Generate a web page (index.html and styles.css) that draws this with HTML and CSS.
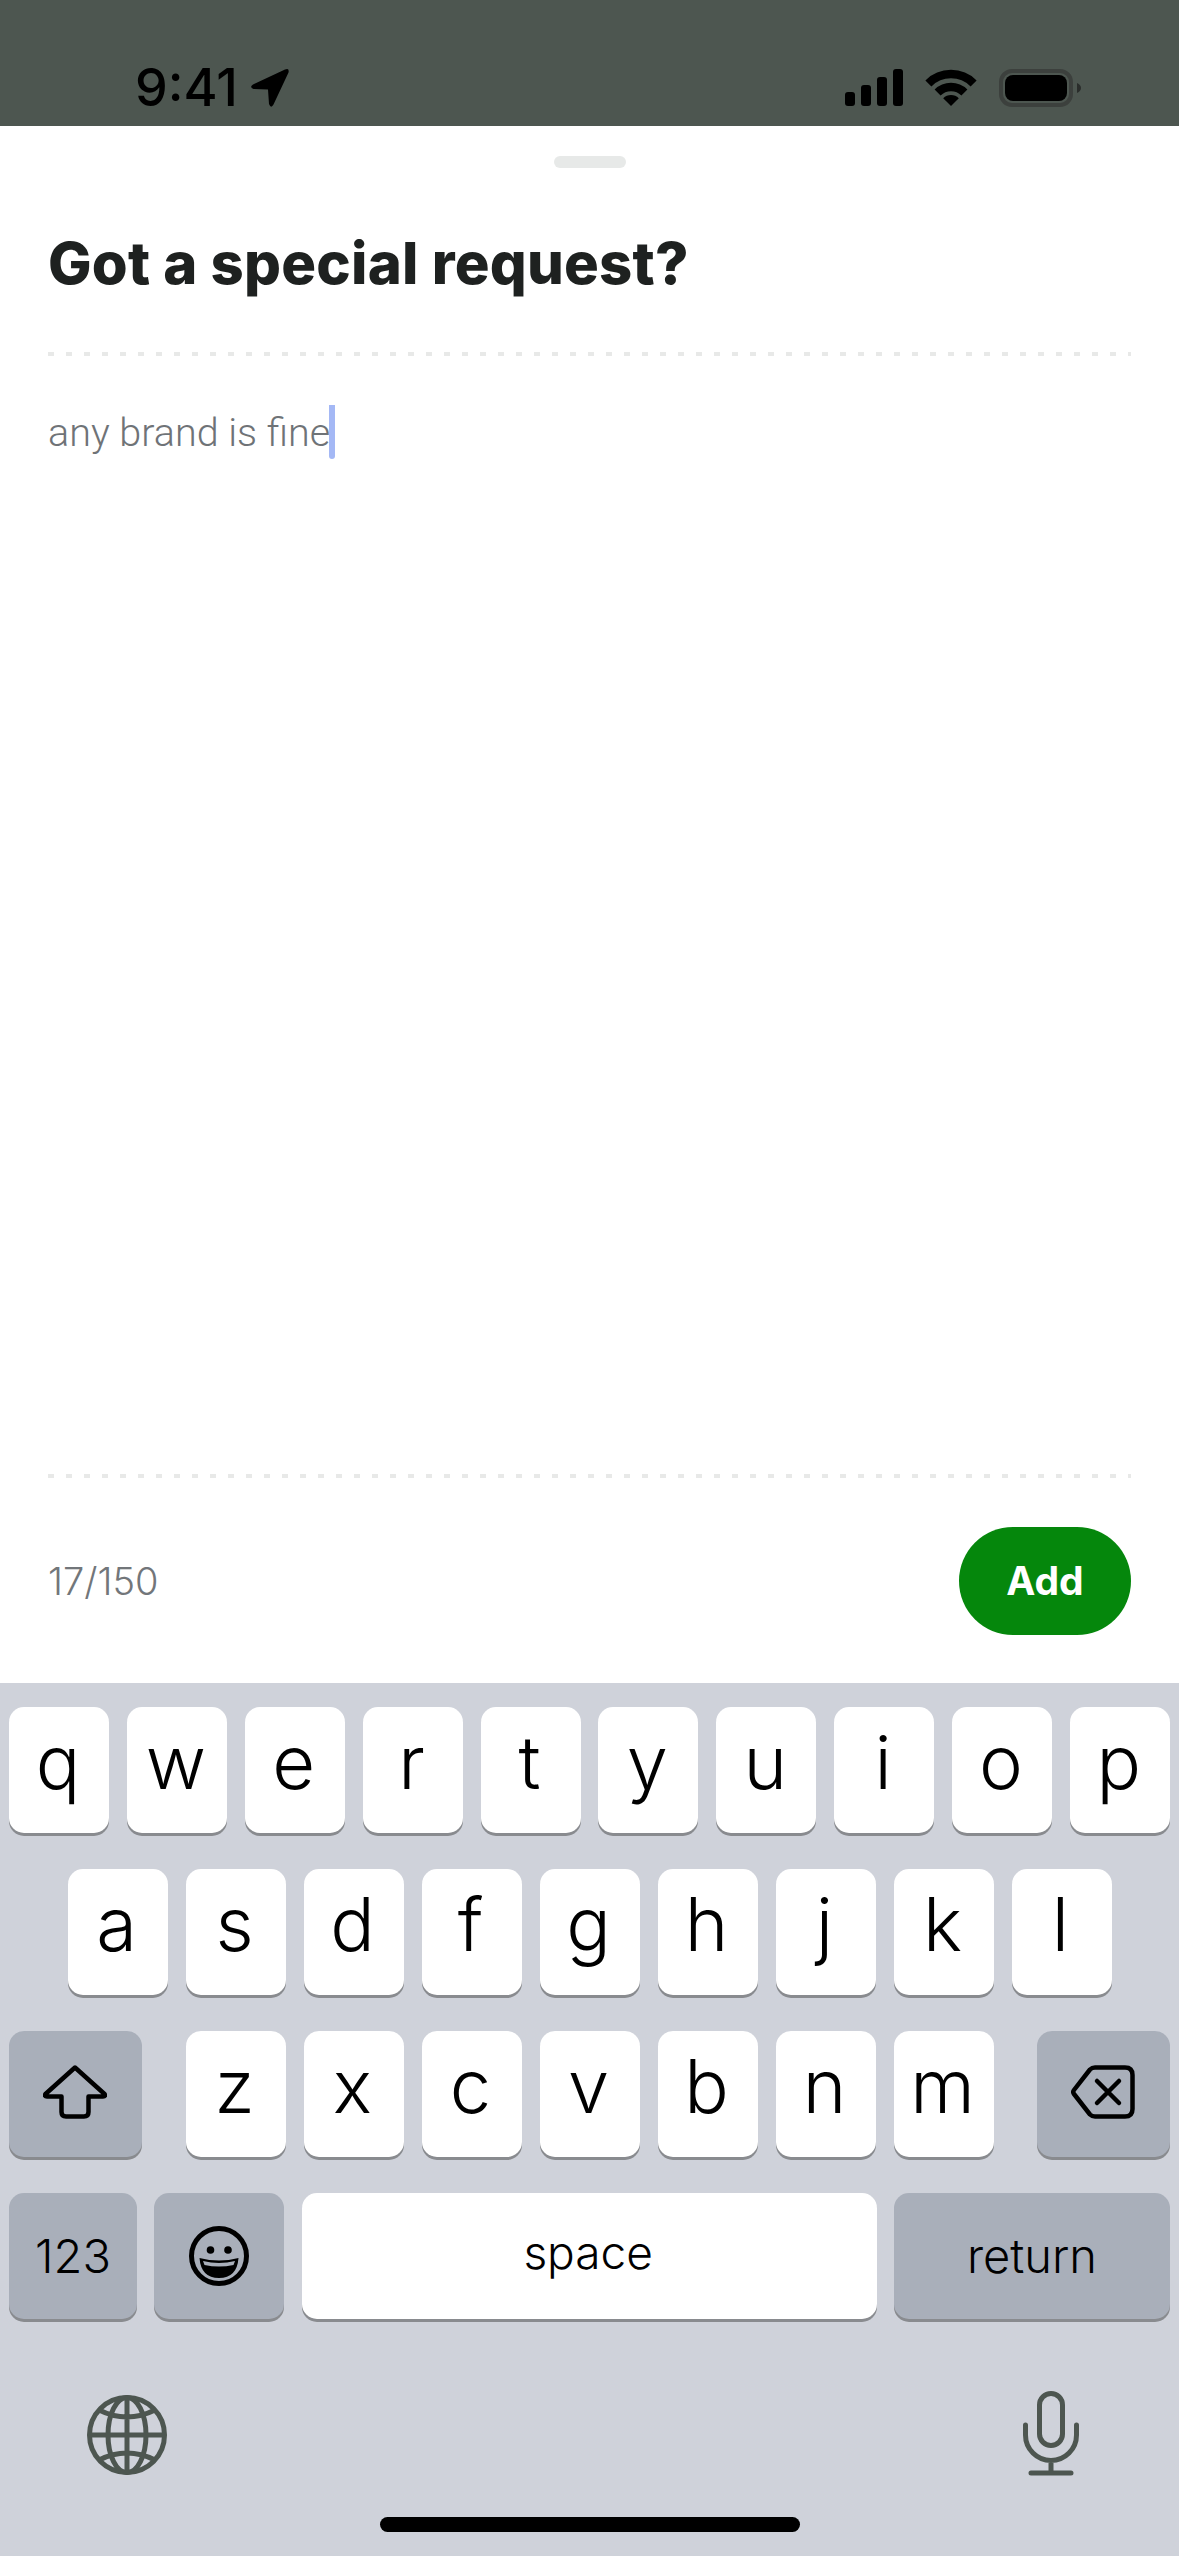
FILE: index.html
```html
<!DOCTYPE html>
<html lang="en">
<head>
<meta charset="utf-8">
<title>Got a special request?</title>
<link rel="stylesheet" href="styles.css">
</head>
<body>
<div class="screen">
  <header class="status">
    <div class="status-left">
      <span class="time">9:41</span>
      <svg class="loc" viewBox="0 0 40 40"><path d="M35 1.5 L3 16.5 Q-1 19 3.5 21 L18 21.5 L19 36 Q21 41 23.5 36.5 L38.5 4.5 Q39.5 -.5 35 1.5Z"/></svg>
    </div>
    <div class="status-right">
      <svg class="signal" viewBox="0 0 58 37"><rect x="0" y="23" width="10" height="14" rx="3"/><rect x="16" y="16" width="10" height="21" rx="3"/><rect x="32" y="8" width="10" height="29" rx="3"/><rect x="48" y="0" width="10" height="37" rx="3"/></svg>
      <svg class="wifi" viewBox="0 0 52 38"><path d="M26 37 L18.2 29.2 A11 11 0 0 1 33.8 29.2Z"/><path class="wifi-arc" d="M12.6 23.6 A19 19 0 0 1 39.4 23.6"/><path class="wifi-arc" d="M3.4 14.4 A32 32 0 0 1 48.6 14.4"/></svg>
      <svg class="battery" viewBox="0 0 82 38"><rect class="batt-frame" x="2" y="2" width="70" height="34" rx="11"/><rect x="6" y="6" width="62" height="26" rx="8"/><path class="batt-nub" d="M78 14 Q82 16 82 19 Q82 22 78 24Z"/></svg>
    </div>
  </header>

  <main class="sheet">
    <div class="handle"></div>
    <h1 class="title">Got a special request?</h1>
    <div class="dots"></div>
    <div class="field"><span class="field-text">any brand is fine</span><span class="caret"></span></div>
    <div class="dots"></div>
    <div class="foot">
      <span class="count">17/150</span>
      <button class="add">Add</button>
    </div>
  </main>

  <section class="keyboard">
    <div class="row">
      <div class="key">q</div><div class="key">w</div><div class="key">e</div><div class="key">r</div><div class="key">t</div><div class="key">y</div><div class="key">u</div><div class="key">i</div><div class="key">o</div><div class="key">p</div>
    </div>
    <div class="row row-center">
      <div class="key">a</div><div class="key">s</div><div class="key">d</div><div class="key">f</div><div class="key">g</div><div class="key">h</div><div class="key">j</div><div class="key">k</div><div class="key">l</div>
    </div>
    <div class="row">
      <div class="key key-mod key-wide">
        <svg class="ico-64" viewBox="0 0 64 54"><path d="M32 2.5 L2.5 29 Q1 31.5 4 31.5 H18.5 V47 Q18.5 51.5 23 51.5 H41 Q45.5 51.5 45.5 47 V31.5 H60 Q63 31.5 61.5 29Z"/></svg>
      </div>
      <div class="letters">
        <div class="key">z</div><div class="key">x</div><div class="key">c</div><div class="key">v</div><div class="key">b</div><div class="key">n</div><div class="key">m</div>
      </div>
      <div class="key key-mod key-wide">
        <svg class="ico-64" viewBox="0 0 64 54"><path d="M24 2.5 H54 Q61.5 2.5 61.5 10 V44 Q61.5 51.5 54 51.5 H24 Q21 51.5 19 49.5 L3 29 Q1.5 27 3 25 L19 4.5 Q21 2.5 24 2.5Z"/><path d="M26 16 L48 38 M48 16 L26 38"/></svg>
      </div>
    </div>
    <div class="row">
      <div class="key key-mod key-123">123</div>
      <div class="key key-mod key-emoji">
        <svg class="ico-emoji" viewBox="0 0 60 60"><circle class="face" cx="30" cy="30" r="27.5"/><circle cx="21.5" cy="24" r="3.8"/><circle cx="39" cy="24" r="3.8"/><path d="M10.5 32 Q30 37 49.5 32 Q48 52 30 52 Q12 52 10.5 32Z"/><path class="teeth" d="M14 35 Q30 39 46 35 L44.5 39 Q30 42 15.5 39Z"/></svg>
      </div>
      <div class="key key-space">space</div>
      <div class="key key-mod key-return">return</div>
    </div>
    <div class="kb-bottom">
      <svg class="globe" viewBox="0 0 80 80"><circle cx="40" cy="40" r="37.5"/><ellipse cx="40" cy="40" rx="19" ry="37.5"/><path d="M40 2.5 V77.5 M2.5 40 H77.5 M12 15 Q40 29 68 15 M12 65 Q40 51 68 65"/></svg>
      <svg class="mic" viewBox="0 0 56 85"><rect x="16.5" y="2.5" width="23" height="52" rx="11.5"/><path d="M2.5 34 V44 A25.5 25.5 0 0 0 53.5 44 V34 M28 70 V82 M8 82 H48"/></svg>
    </div>
    <div class="home-bar"></div>
  </section>
</div>
</body>
</html>
```
FILE: styles.css
```css
* { box-sizing: border-box; }
html, body { margin: 0; padding: 0; }
body { background: #fff; font-family: Inter, "Liberation Sans", sans-serif; }

.screen { width: 1179px; height: 2556px; display: flex; flex-direction: column; overflow: hidden; }

/* status bar */
.status { height: 126px; background: #4d5650; display: flex; justify-content: space-between; align-items: flex-start; padding: 68px 98px 0 135px; flex: none; }
.status-left { display: flex; align-items: center; gap: 12px; height: 39px; }
.time { font-size: 52px; font-weight: 500; line-height: 39px; color: #000; }
.loc { width: 40px; height: 40px; fill: #000; }
.status-right { display: flex; align-items: center; gap: 22px; height: 39px; }
.signal { width: 58px; height: 37px; fill: #000; }
.wifi { width: 52px; height: 38px; fill: #000; }
.wifi-arc { fill: none; stroke: #000; stroke-width: 8.5; }
.battery { width: 82px; height: 38px; fill: #000; }
.batt-frame { fill: none; stroke: #3c403d; stroke-width: 4; }
.batt-nub { fill: #2a2d2b; }

/* sheet */
.sheet { flex: 1; display: flex; flex-direction: column; padding: 30px 48px 48px; background: #fff; }
.handle { width: 72px; height: 12px; border-radius: 6px; background: #e7e9e8; align-self: center; flex: none; }
.title { margin: 59px 0 0; font-size: 58px; line-height: 72px; font-weight: 800; color: #1e2120; letter-spacing: 0.23px; }
.dots { height: 4px; flex: none; background: repeating-linear-gradient(to right, #e8e9e8 0, #e8e9e8 6px, transparent 6px, transparent 18px); }
.title + .dots { margin-top: 53px; }
.field { flex: 1; padding-top: 49px; display: flex; align-items: flex-start; }
.field-text { font-family: Roboto, Inter, sans-serif; font-size: 39.5px; line-height: 56px; font-weight: 300; color: #6f7377; }
.caret { width: 6px; height: 54px; margin-left: -1px; background: #a4b8f5; border-radius: 0 0 3px 3px; }
.foot { display: flex; justify-content: space-between; align-items: center; margin-top: 49px; }
.count { font-size: 38px; font-weight: 300; color: #72767a; }
.add { width: 172px; height: 108px; border: 0; border-radius: 54px; background: #05870c; color: #fff; font-family: inherit; font-size: 39px; font-weight: 700; padding: 0 0 2px; }

/* keyboard */
.keyboard { position: relative; height: 873px; flex: none; background: #cfd2da; padding: 24px 9px 0; display: flex; flex-direction: column; gap: 36px; }
.row { display: flex; justify-content: space-between; }
.row-center { justify-content: center; gap: 18px; }
.letters { display: flex; gap: 18px; }
.key { width: 100px; height: 126px; flex: none; border-radius: 15px; background: #fff; box-shadow: 0 3px 0 #898b8f; color: #000; font-size: 74px; font-weight: 350; line-height: 1; display: flex; align-items: center; justify-content: center; padding: 0 2px 17px 0; }
.key-mod { background: #a9afba; padding: 0 0 2px; }
.key-wide { width: 133px; padding: 0 1px 4px 0; }
.key-123 { width: 128px; font-size: 47px; }
.key-emoji { width: 130px; padding: 0; }
.key-space { width: 575px; font-size: 46px; padding: 0 2px 8px 0; }
.key-return { width: 276px; font-size: 47px; padding: 0 0 1px; }
.ico-64 { width: 64px; height: 54px; fill: none; stroke: #000; stroke-width: 4.5; stroke-linejoin: round; stroke-linecap: round; }
.ico-emoji { width: 60px; height: 60px; fill: #000; }
.face { fill: none; stroke: #000; stroke-width: 5; }
.teeth { fill: #a9afba; }

.kb-bottom { display: flex; justify-content: space-between; align-items: center; padding: 37px 91px 0 78px; height: 120px; }
.globe { width: 80px; height: 80px; margin-top: 3px; fill: none; stroke: #4d5650; stroke-width: 5; }
.mic { width: 56px; height: 85px; fill: none; stroke: #4d5650; stroke-width: 5; stroke-linecap: round; }
.home-bar { position: absolute; left: 380px; bottom: 24px; width: 420px; height: 15px; border-radius: 8px; background: #000; }
```
